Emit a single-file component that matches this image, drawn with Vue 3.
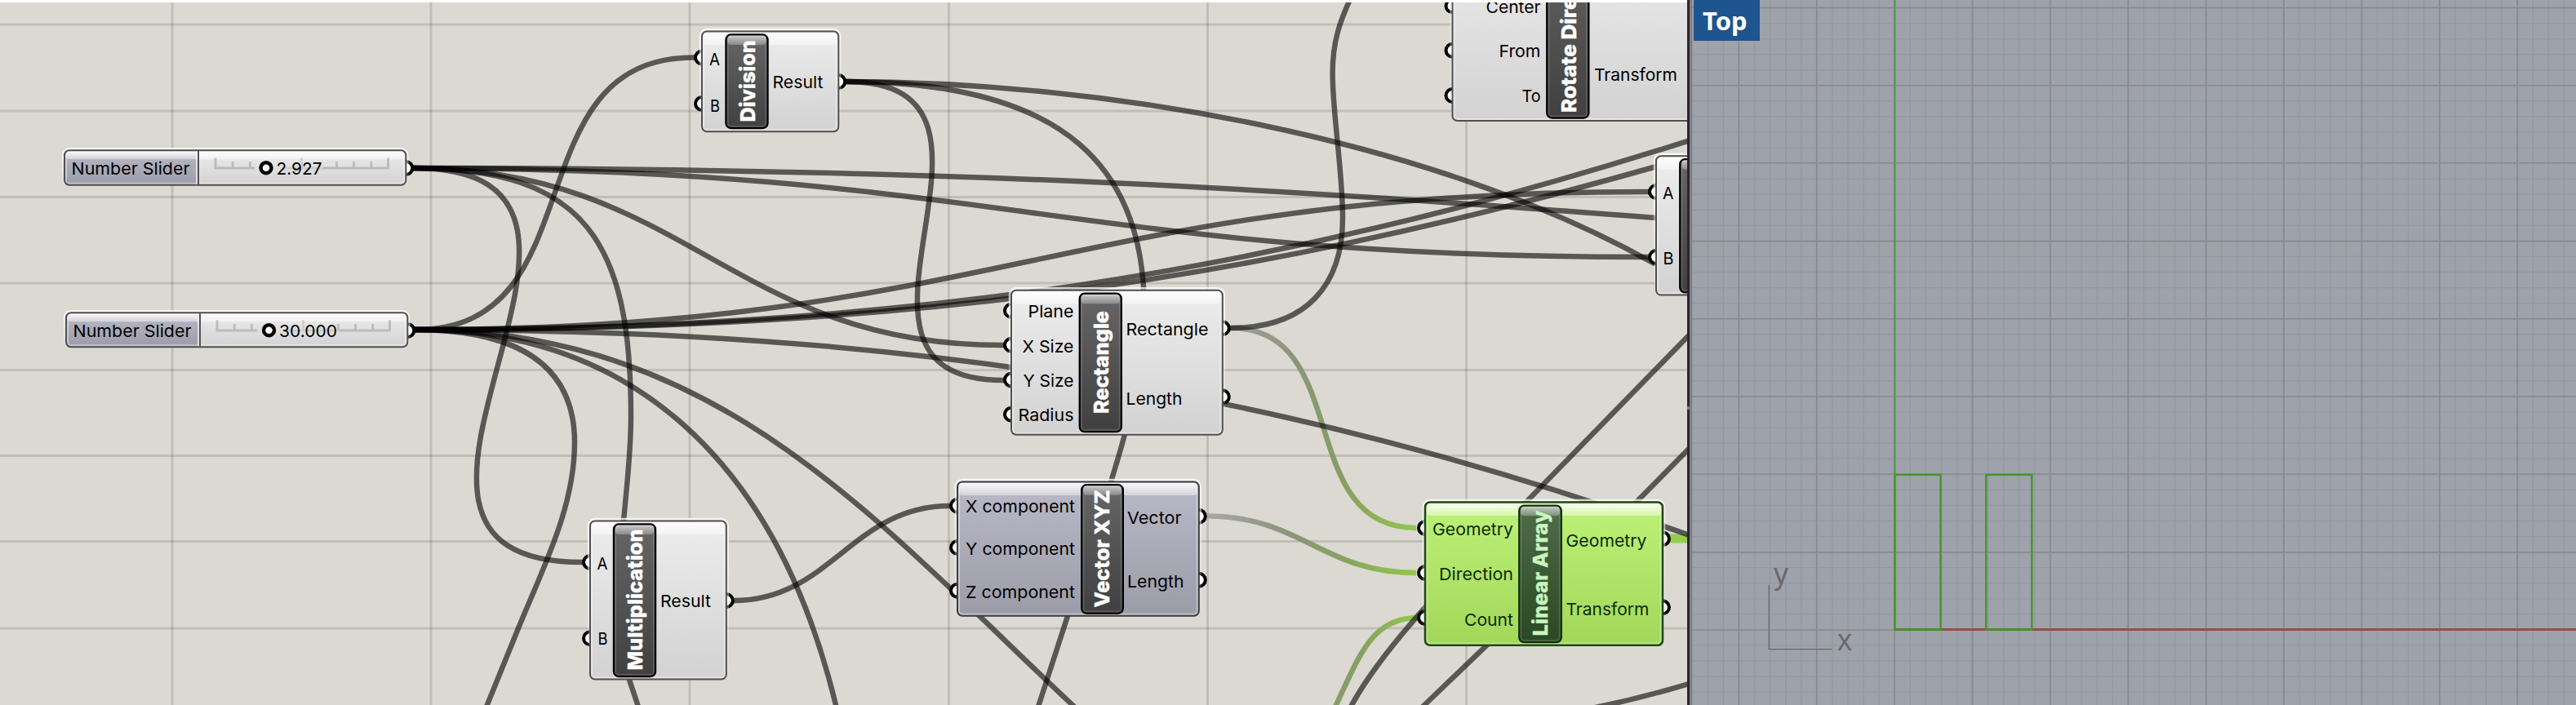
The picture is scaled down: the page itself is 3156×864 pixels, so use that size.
<script setup>
const gridX = [211, 528, 845, 1162.5, 1479.5, 1796.5]
const gridY = [30, 136, 241.5, 347, 453.5, 558.5, 663.5, 770]

// cubic wire between an output and an input grip
const wire = (x0, y0, x1, y1, d) => `M${x0},${y0} C${x0 + d},${y0} ${x1 - d},${y1} ${x1},${y1}`

const wires = [
  wire(507, 206, 713, 689, 336),
  'M507,206 C720,206 773,300 773,510 C773,560 766,610 764,640 C758,710 757,780 771,833 L782,866',
  wire(507, 206, 1228, 423, 334),
  wire(507, 206, 2018, 315, 705),
  wire(507, 206, 3500, 324, 1407),
  wire(510, 404, 849, 70.5, 222),
  wire(510, 404, 2018, 235, 705),
  'M510,404 C1100,404 1550,338 2067,173 L2072,171',
  'M510,404 C1100,404 1520,348 2026,205',
  'M510,404 C1100,404 1560,475 2067,655',
  'M510,404 C770,404 950,560 1024,864',
  'M510,404 C880,404 1070,635 1314,864 L1318,868',
  'M510,404 C645,404 704,455 704,542 C704,620 668,690 635,770 L596,866',
  wire(1037, 100, 1229, 466, 249),
  'M1037,100 C1310,100 1402,210 1402,380 C1402,440 1391,480 1377,536 C1360,600 1325,700 1308,755 L1272,866',
  'M1037,100 C1350,100 1750,168 2025,322',
  wire(899, 736, 1163, 620, 118),
  'M1508,402 C1600,402 1645,350 1645,267 C1645,210 1632.6,140 1632.6,90 C1632.6,50 1642,25 1656,-5',
  'M1655,866 C1690,800 1770,715 1871,614 L2072,408',
  'M1743,866 L2006,614 L2072,547',
  'M1945,869 Q2010,856 2072,837',
]

const greenWires = [
  { d: wire(1508, 402, 1735, 647, 150), g: 'url(#wireA)' },
  { d: wire(1479, 632.5, 1735, 702, 116), g: 'url(#wireB)' },
  { d: 'M1636,866 C1665,805 1680,757 1737,757', g: 'url(#wireC)' },
]

const nodes = [
  {
    kind: 'plain', x: 860, y: 38.5, w: 167.3, h: 122.7, cx: 889.5, cy: 42.5, cw: 51, ch: 114.5,
    title: 'Division', tx: 924.5, ty: 149.5, tl: 100,
    ins: [{ t: 'A', x: 882, y: 80, p: 70.5, l: 13 }, { t: 'B', x: 882, y: 136.5, p: 127, l: 12 }],
    outs: [{ t: 'Result', x: 946.5, y: 108.3, p: 100, l: 62 }],
  },
  {
    kind: 'plain', x: 723, y: 638.5, w: 166.8, h: 194, cx: 752, cy: 642.5, cw: 51, ch: 186.5,
    title: 'Multiplication', tx: 787, ty: 821.5, tl: 173,
    ins: [{ t: 'A', x: 744.5, y: 698, p: 689, l: 13 }, { t: 'B', x: 744.5, y: 790.3, p: 782.3, l: 12 }],
    outs: [{ t: 'Result', x: 809, y: 744.3, p: 736, l: 62 }],
  },
  {
    kind: 'plain', x: 1239, y: 355.8, w: 258.8, h: 177, cx: 1322.8, cy: 359.8, cw: 51, ch: 169.3,
    title: 'Rectangle', tx: 1358, ty: 507, tl: 126,
    ins: [
      { t: 'Plane', x: 1315.5, y: 388.7, p: 380.7, l: 56 },
      { t: 'X Size', x: 1315.5, y: 431.5, p: 422.7, l: 63 },
      { t: 'Y Size', x: 1315.5, y: 473.7, p: 465.5, l: 62 },
      { t: 'Radius', x: 1315.5, y: 515.7, p: 507.7, l: 68 },
    ],
    outs: [{ t: 'Rectangle', x: 1379.5, y: 410.7, p: 402.3, l: 101 }, { t: 'Length', x: 1379.5, y: 495.7, p: 486.3, l: 69 }],
  },
  {
    kind: 'hidden', x: 1173, y: 590.5, w: 295.8, h: 164.3, cx: 1325.3, cy: 594.3, cw: 50.5, ch: 157.3,
    title: 'Vector XYZ', tx: 1359, ty: 744.5, tl: 144,
    ins: [
      { t: 'X component', x: 1317, y: 627.5, p: 619.7, l: 134 },
      { t: 'Y component', x: 1317, y: 680, p: 671, l: 134 },
      { t: 'Z component', x: 1317, y: 733, p: 723.7, l: 134 },
    ],
    outs: [{ t: 'Vector', x: 1381, y: 642, p: 632.7, l: 66.5 }, { t: 'Length', x: 1381, y: 720.3, p: 710.7, l: 69.5 }],
  },
  {
    kind: 'selected', x: 1746, y: 615.5, w: 291, h: 175.3, cx: 1861.3, cy: 619.8, cw: 51.5, ch: 167.3,
    title: 'Linear Array', tx: 1896, ty: 779.5, tl: 154,
    ins: [
      { t: 'Geometry', x: 1854, y: 656, p: 647, l: 99 },
      { t: 'Direction', x: 1854, y: 710.7, p: 702, l: 91 },
      { t: 'Count', x: 1854, y: 766.5, p: 757, l: 60 },
    ],
    outs: [{ t: 'Geometry', x: 1918.5, y: 669.7, p: 660.3, l: 99 }, { t: 'Transform', x: 1918.5, y: 753.7, p: 744.3, l: 102 }],
  },
  {
    kind: 'plain', x: 1779.5, y: -75, w: 330, h: 223, cx: 1895.3, cy: -70, cw: 51, ch: 214.5,
    title: 'Rotate Direction', tx: 1930.5, ty: 138, tl: 207,
    ins: [
      { t: 'Center', x: 1887.5, y: 15.5, p: 7.3, l: 67 },
      { t: 'From', x: 1887.5, y: 69.7, p: 61.7, l: 51 },
      { t: 'To', x: 1887.5, y: 125, p: 117, l: 23 },
    ],
    outs: [{ t: 'Transform', x: 1953, y: 98.5, p: 60, l: 102 }],
  },
  {
    kind: 'plain', x: 2029, y: 191.3, w: 170, h: 170.3, cx: 2058.3, cy: 195.3, cw: 51.5, ch: 163,
    title: '', tx: 2094, ty: 340, tl: 100,
    ins: [{ t: 'A', x: 2050.5, y: 243.8, p: 235, l: 13.5 }, { t: 'B', x: 2050.5, y: 324.3, p: 315, l: 13 }],
    outs: [],
  },
]

const sliders = [
  { x: 79, y: 184.3, w: 418.3, h: 42.5, split: 243, lx: 87.5, base: 213.7, track: 264, line: 206, knob: 326, value: '2.927', vx: 338.5, vl: 56, gap: 384 },
  { x: 81, y: 383.3, w: 418.3, h: 42, split: 245, lx: 89.5, base: 412.5, track: 266, line: 405, knob: 329.5, value: '30.000', vx: 342, vl: 71, gap: 404 },
]

const majorY = [9.5, 104.7, 199.8, 295.6, 390.7, 485.8, 581, 677, 772]
const majorX = Array.from({ length: 11 }, (_, i) => 2321 - 190.7 + i * 95.4)
const minorX = Array.from({ length: 58 }, (_, i) => 2321 - 247.6 + i * 19.07).filter((x) => x > 2073)
const minorY = Array.from({ length: 46 }, (_, i) => 9.5 + i * 19.06)
</script>

<template>
  <main class="screen">
    <section class="editor">
      <svg class="canvas" width="2067" height="864" viewBox="0 0 2067 864">
        <defs>
          <linearGradient id="plain" x1="0" y1="0" x2="0" y2="1">
            <stop offset="0" stop-color="#ededed" /><stop offset="1" stop-color="#d2d2d2" />
          </linearGradient>
          <linearGradient id="hidden" x1="0" y1="0" x2="0" y2="1">
            <stop offset="0" stop-color="#b9b9c7" /><stop offset="1" stop-color="#9c9ca9" />
          </linearGradient>
          <linearGradient id="selected" x1="0" y1="0" x2="0" y2="1">
            <stop offset="0" stop-color="#bdf278" /><stop offset="1" stop-color="#a2d75a" />
          </linearGradient>
          <linearGradient id="cap" x1="0" y1="0" x2="0" y2="1">
            <stop offset="0" stop-color="#666" /><stop offset="1" stop-color="#404040" />
          </linearGradient>
          <linearGradient id="capSelected" x1="0" y1="0" x2="0" y2="1">
            <stop offset="0" stop-color="#506c4a" /><stop offset="1" stop-color="#2a4824" />
          </linearGradient>
          <linearGradient id="gloss" x1="0" y1="0" x2="0" y2="1">
            <stop offset="0" stop-color="#fff" stop-opacity=".9" /><stop offset="1" stop-color="#fff" stop-opacity=".4" />
          </linearGradient>
          <linearGradient id="capGloss" x1="0" y1="0" x2="0" y2="1">
            <stop offset="0" stop-color="#fff" stop-opacity=".65" /><stop offset="1" stop-color="#fff" stop-opacity=".25" />
          </linearGradient>
          <linearGradient id="halo" x1="0" y1="0" x2="0" y2="1">
            <stop offset="0" stop-color="#fff" stop-opacity=".75" /><stop offset="1" stop-color="#fff" stop-opacity="0" />
          </linearGradient>
          <linearGradient id="wireA" gradientUnits="userSpaceOnUse" x1="1508" y1="0" x2="1735" y2="0">
            <stop offset="0" stop-color="#a09f9b" /><stop offset=".35" stop-color="#8a9778" /><stop offset=".6" stop-color="#869e64" /><stop offset="1" stop-color="#92c84c" />
          </linearGradient>
          <linearGradient id="wireB" gradientUnits="userSpaceOnUse" x1="1479" y1="0" x2="1735" y2="0">
            <stop offset="0" stop-color="#a8a7a3" /><stop offset=".4" stop-color="#89967a" /><stop offset=".65" stop-color="#88a260" /><stop offset="1" stop-color="#92c84c" />
          </linearGradient>
          <linearGradient id="wireC" gradientUnits="userSpaceOnUse" x1="1600" y1="0" x2="1735" y2="0">
            <stop offset="0" stop-color="#8a9778" /><stop offset=".5" stop-color="#86a062" /><stop offset="1" stop-color="#92c84c" />
          </linearGradient>
        </defs>

        <g class="grid">
          <line v-for="x in gridX" :key="'x' + x" :x1="x" :x2="x" y1="3" y2="864" />
          <line v-for="y in gridY" :key="'y' + y" x1="0" x2="2067" :y1="y" :y2="y" />
        </g>

        <g class="wires">
          <path d="M2045,660 H2067" class="data" />
          <path v-for="w in greenWires" :key="w.d" :d="w.d" :stroke="w.g" />
          <path v-for="w in wires" :key="w" :d="w" class="dark" />
        </g>

        <g v-for="s in sliders" :key="s.value">
          <circle class="port" :cx="s.x + s.w" :cy="s.line" r="8" />
          <rect class="halo" :x="s.x - 2" :y="s.y - 2" :width="s.w + 4" :height="s.h + 3.5" rx="8" />
          <rect :x="s.x" :y="s.y" :width="s.w" :height="s.h" rx="6" fill="url(#plain)" />
          <path :d="`M${s.split},${s.y} H${s.x + 6} q-6,0 -6,6 v${s.h - 12} q0,6 6,6 H${s.split} Z`" fill="url(#hidden)" />
          <rect :x="s.x + 2" :y="s.y + 1" :width="s.w - 4" height="10" rx="4" fill="url(#gloss)" />
          <rect class="rim" :x="s.x + 2" :y="s.y + 2" :width="s.w - 4" :height="s.h - 4" rx="4" />
          <line class="split-light" :x1="s.split - 2" :x2="s.split - 2" :y1="s.y" :y2="s.y + s.h" />
          <line class="split" :x1="s.split" :x2="s.split" :y1="s.y" :y2="s.y + s.h" />
          <rect class="frame" :x="s.x" :y="s.y" :width="s.w" :height="s.h" rx="6" />
          <g class="ticks">
            <path :d="`M${s.track - 1.5},${s.line} H${s.knob - 14} M${s.gap + 12},${s.line} H${s.track + 213}`" />
            <path class="faint" :d="`M${s.vx + 8},${s.line} H${s.gap + 12}`" />
            <path :d="`M${s.track},${s.line} v-12.5 M${s.track + 211.5},${s.line} v-12.5`" />
            <path v-for="i in [1, 2, 7, 8, 9]" :key="i" :d="`M${s.track + i * 21.2},${s.line} v-8`" />
            <path class="faint" :d="`M${s.track + 105.5},${s.line} v-12.5 M${s.track + 127},${s.line} v-8`" />
          </g>
          <circle class="knob" :cx="s.knob" :cy="s.line - 0.3" r="6.5" />
          <text class="label" :x="s.lx" :y="s.base" textLength="145" lengthAdjust="spacingAndGlyphs">Number Slider</text>
          <text class="label" :x="s.vx" :y="s.base" :textLength="s.vl" lengthAdjust="spacingAndGlyphs">{{ s.value }}</text>
        </g>

        <g v-for="n in nodes" :key="n.title" :class="n.kind">
          <circle v-for="i in n.ins" :key="'i' + i.p" class="port" :cx="n.x" :cy="i.p" r="8" />
          <circle v-for="o in n.outs" :key="'o' + o.p" class="port" :cx="n.x + n.w" :cy="o.p" r="8" />
          <rect class="halo" :x="n.x - 2" :y="n.y - 2.5" :width="n.w + 4" :height="n.h + 4" rx="8" />
          <rect :x="n.x" :y="n.y" :width="n.w" :height="n.h" rx="6" :fill="`url(#${n.kind})`" />
          <rect :x="n.x + 2" :y="n.y + 1" :width="n.w - 4" height="15.5" rx="4" fill="url(#gloss)" />
          <rect class="rim" :x="n.x + 2" :y="n.y + 2" :width="n.w - 4" :height="n.h - 4" rx="4" />
          <rect class="frame" :x="n.x" :y="n.y" :width="n.w" :height="n.h" rx="6" />
          <rect class="cap" :x="n.cx" :y="n.cy" :width="n.cw" :height="n.ch" rx="6" />
          <rect :x="n.cx + 2" :y="n.cy + 1" :width="n.cw - 4" height="11.5" rx="4" fill="url(#capGloss)" />
          <rect class="cap-rim" :x="n.cx + 2" :y="n.cy + 2" :width="n.cw - 4" :height="n.ch - 4" rx="4" />
          <text
            v-if="n.title" class="title" :transform="`translate(${n.tx} ${n.ty}) rotate(-90)`"
            :textLength="n.tl" lengthAdjust="spacingAndGlyphs"
          >{{ n.title }}</text>
          <text
            v-for="i in n.ins" :key="'t' + i.p" class="label end" :x="i.x" :y="i.y"
            :textLength="i.l" lengthAdjust="spacingAndGlyphs"
          >{{ i.t }}</text>
          <text
            v-for="o in n.outs" :key="'u' + o.p" class="label" :x="o.x" :y="o.y"
            :textLength="o.l" lengthAdjust="spacingAndGlyphs"
          >{{ o.t }}</text>
        </g>
        <rect x="0" y="0" width="2067" height="3" fill="#fff" />
      </svg>
    </section>

    <div class="divider"><span class="notch"></span></div>

    <section class="viewport">
      <svg class="canvas" width="1083" height="864" viewBox="2073 0 1083 864">
        <g class="minor">
          <line v-for="x in minorX" :key="'a' + x" :x1="x" :x2="x" y1="0" y2="864" />
          <line v-for="y in minorY" :key="'b' + y" x1="2073" x2="3156" :y1="y" :y2="y" />
        </g>
        <g class="major">
          <line v-for="x in majorX" :key="'c' + x" :x1="x" :x2="x" y1="0" y2="864" />
          <line v-for="y in majorY" :key="'d' + y" x1="2073" x2="3156" :y1="y" :y2="y" />
        </g>
        <path d="M2321.3,0 V771" stroke="#5b9951" stroke-width="2.6" />
        <path d="M2321,771.5 H3156" stroke="#934f4e" stroke-width="3" />
        <g class="curves">
          <rect x="2321.3" y="581.8" width="56.3" height="189.7" />
          <rect x="2433.3" y="581.8" width="56" height="189.7" />
        </g>
        <path class="compass" d="M2167.2,717 V795.6 H2244.5" />
        <text class="axis" x="2173" y="715.5">y</text>
        <text class="axis" x="2251" y="797">x</text>
      </svg>
      <div class="view-name">Top</div>
    </section>
  </main>
</template>

<style scoped>
.screen {
  display: flex;
  width: 3156px;
  height: 864px;
  overflow: hidden;
  font-family: Inter, "Liberation Sans", sans-serif;
}
.editor {
  width: 2067px;
  background: #dcd9d2;
}
.canvas { display: block; }
.divider {
  display: flex;
  align-items: flex-start;
  box-sizing: border-box;
  width: 6px;
  background: #2a2630;
  border-right: 3px solid #7f8084;
}
.notch {
  width: 3px;
  height: 4px;
  margin-top: 498px;
  background: #77757a;
}
.viewport {
  position: relative;
  width: 1083px;
  background: #9ea2aa;
}
.view-name {
  position: absolute;
  left: 2px;
  top: 0;
  box-sizing: border-box;
  width: 81px;
  height: 49.5px;
  padding-left: 11px;
  background: #1f558f;
  color: #fff;
  font: 700 31px/50px "Noto Sans", sans-serif;
}
.grid line { stroke: rgba(0, 0, 0, 0.12); stroke-width: 3; }
.wires path { fill: none; stroke-width: 6.5; }
.wires .dark { stroke: rgba(0, 0, 0, 0.6); stroke-linecap: square; }
.wires .data { stroke: #97cd4f; stroke-width: 11; }
.port { fill: #fff; stroke: #000; stroke-width: 4; }
.halo { fill: none; stroke: url(#halo); stroke-width: 2.5; }
.rim { fill: none; stroke: rgba(255, 255, 255, 0.4); stroke-width: 2; }
.frame { fill: none; stroke: #505050; stroke-width: 2; }
.hidden .frame { stroke: #3c3c40; }
.selected .frame { stroke: #1f4a12; stroke-width: 2.6; }
.cap { fill: url(#cap); stroke: #000; stroke-width: 2.4; }
.cap-rim { fill: none; stroke: rgba(255, 255, 255, 0.15); stroke-width: 2; }
.selected .cap { fill: url(#capSelected); stroke: #12300b; }
.label { font-size: 20.6px; fill: #000; }
.selected .label { fill: #0d2b06; }
.end { text-anchor: end; }
.title { font-size: 25px; font-weight: 800; fill: #fff; stroke: #fff; stroke-width: 0.4; }
.selected .title { fill: #c8f5bd; stroke: #c8f5bd; }
.split { stroke: #555; stroke-width: 2; }
.split-light { stroke: rgba(255, 255, 255, 0.65); stroke-width: 2; }
.ticks path { fill: none; stroke: #bcbcbc; stroke-width: 3; }
.ticks .faint { stroke: #cecece; }
.knob { fill: #fff; stroke: #000; stroke-width: 4.4; }
.minor line { stroke: #94989f; stroke-width: 1.3; }
.major line { stroke: #87898d; stroke-width: 1.6; }
.curves rect { fill: none; stroke: #43992a; stroke-width: 2.5; stroke-linejoin: round; }
.compass { fill: none; stroke: #69696b; stroke-width: 1.3; }
.axis { font: 36px "Liberation Sans", sans-serif; fill: #69696b; }
</style>

<style>
body { margin: 0; background: #dcd9d2; }
</style>
